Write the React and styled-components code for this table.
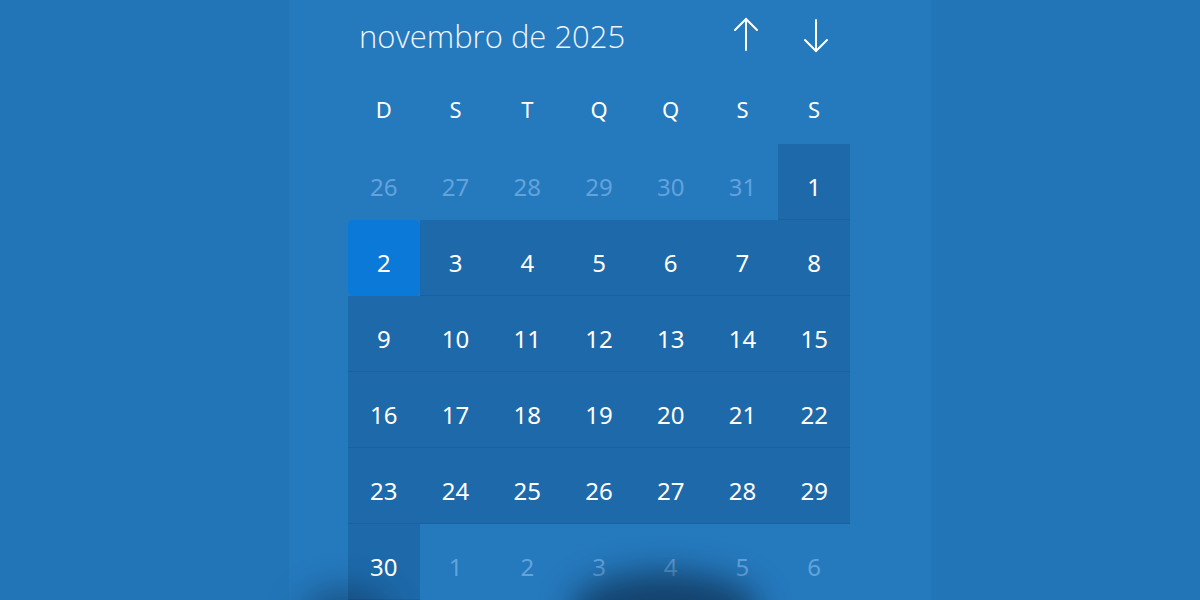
import React from "react";
import styled, { createGlobalStyle } from "styled-components";

const Global = createGlobalStyle`
  html, body {
    margin: 0;
    padding: 0;
    background: #2276b8;
    overflow: hidden;
  }
`;

const Page = styled.div`
  width: 1200px;
  height: 600px;
  display: flex;
  justify-content: center;
  background: #2276b8;
  position: relative;
  overflow: hidden;
`;

const Panel = styled.div`
  width: 642px;
  height: 600px;
  margin-left: 20px;
  background: #2579bd;
  display: flex;
  flex-direction: column;
`;

const Header = styled.div`
  height: 80px;
  display: flex;
  align-items: center;
  padding-left: 70px;
`;

const Title = styled.div`
  font-family: "Open Sans", "Noto Sans", sans-serif;
  font-weight: 300;
  font-size: 31px;
  color: #eef4fb;
  width: 374px;
  margin-top: -5px;
`;

const Arrows = styled.div`
  display: flex;
  gap: 44px;
  margin-top: -4px;
`;

const ArrowBtn = styled.div`
  width: 26px;
  height: 40px;
  display: flex;
  align-items: center;
  justify-content: center;
  margin-top: ${(p) => p.$top || 0}px;
`;

const Grid = styled.div`
  margin-left: 59px;
  width: 502px;
  display: grid;
  grid-template-columns: repeat(7, 1fr);
`;

const Weekday = styled.div`
  height: 68px;
  padding-bottom: 2px;
  box-sizing: border-box;
  display: flex;
  align-items: center;
  justify-content: center;
  font-family: "Noto Sans", sans-serif;
  font-size: 22px;
  color: #ffffff;
`;

const Cell = styled.div`
  height: 76px;
  padding-top: 8px;
  box-sizing: border-box;
  display: flex;
  align-items: center;
  justify-content: center;
  font-family: "Noto Sans", sans-serif;
  font-size: 24px;
  color: ${(p) => (p.$out ? "#62a3dc" : "#ffffff")};
  background: ${(p) => (p.$today ? "#0a79d8" : p.$out ? "transparent" : "#1d69a9")};
  border-radius: ${(p) => (p.$today ? "5px" : "0")};
  box-shadow: ${(p) => (p.$out || p.$today ? "none" : "inset 0 -1px 0 rgba(20, 80, 140, 0.3)")};
`;

const Shade = styled.div`
  position: absolute;
  left: 570px;
  top: 572px;
  width: 190px;
  height: 80px;
  border-radius: 50%;
  background: rgba(8, 30, 55, 0.6);
  filter: blur(16px);
  pointer-events: none;
`;

const ShadeLeft = styled(Shade)`
  left: 300px;
  top: 588px;
  width: 90px;
  height: 50px;
  background: rgba(8, 30, 55, 0.4);
`;

const Arrow = ({ down }) => (
  <svg width="26" height="36" viewBox="0 0 26 36" fill="none" stroke="#fff" strokeWidth="2" strokeLinecap="round">
    {down ? (
      <>
        <line x1="13" y1="2" x2="13" y2="33" />
        <polyline points="2,22 13,33 24,22" />
      </>
    ) : (
      <>
        <line x1="13" y1="3" x2="13" y2="34" />
        <polyline points="2,14 13,3 24,14" />
      </>
    )}
  </svg>
);

const weekdays = ["D", "S", "T", "Q", "Q", "S", "S"];

const days = [
  ...[26, 27, 28, 29, 30, 31].map((d) => ({ d, out: true })),
  ...Array.from({ length: 30 }, (_, i) => ({ d: i + 1, today: i + 1 === 2 })),
  ...[1, 2, 3, 4, 5, 6].map((d) => ({ d, out: true })),
];

export default function App() {
  return (
    <Page>
      <Global />
      <Panel>
        <Header>
          <Title>novembro de 2025</Title>
          <Arrows>
            <ArrowBtn $top={-2}>
              <Arrow />
            </ArrowBtn>
            <ArrowBtn $top={0}>
              <Arrow down />
            </ArrowBtn>
          </Arrows>
        </Header>
        <Grid>
          {weekdays.map((w, i) => (
            <Weekday key={"w" + i}>{w}</Weekday>
          ))}
          {days.map((c, i) => (
            <Cell key={i} $out={c.out} $today={c.today}>
              {c.d}
            </Cell>
          ))}
        </Grid>
      </Panel>
      <Shade />
      <ShadeLeft />
    </Page>
  );
}
